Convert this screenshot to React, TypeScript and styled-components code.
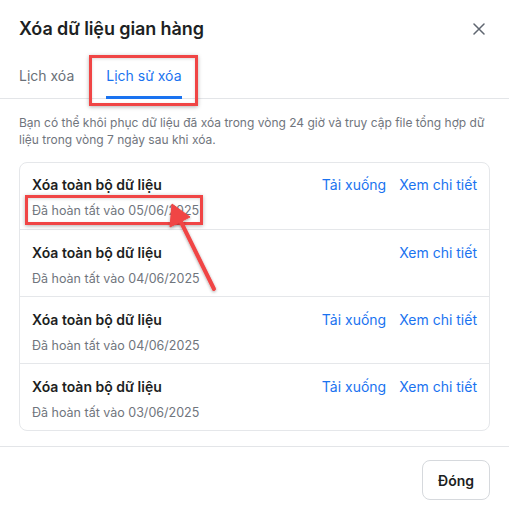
import React from "react";
import styled, { createGlobalStyle } from "styled-components";

const Global = createGlobalStyle`
  html, body { margin: 0; padding: 0; background: #fff; }
  body { font-family: Inter, "Noto Sans", sans-serif; color: #1f2328; }
  * { box-sizing: border-box; }
`;

const Modal = styled.div`
  position: relative;
  width: 509px;
  height: 506px;
  background: #fff;
  display: flex;
  flex-direction: column;
  overflow: hidden;
`;

const Header = styled.div`
  display: flex;
  align-items: center;
  justify-content: space-between;
  padding: 18px 22px 0 19px;
  height: 58px;
`;

const Title = styled.h1`
  margin: 0;
  font-size: 18px;
  font-weight: 600;
  color: #1d1f23;
  letter-spacing: -0.1px;
`;

const CloseBtn = styled.button`
  border: 0;
  background: none;
  padding: 0;
  width: 16px;
  height: 16px;
  display: flex;
  align-items: center;
  justify-content: center;
  color: #5f6670;
  cursor: pointer;
`;

const Tabs = styled.div`
  display: flex;
  gap: 32px;
  padding: 0 19px;
  border-bottom: 1px solid #e3e5e8;
  margin-top: 17px;
`;

const Tab = styled.div<{ $active?: boolean }>`
  font-size: 14px;
  line-height: 20px;
  padding: 10px 0 10px;
  color: ${(p) => (p.$active ? "#1a73f0" : "#6a7078")};
  border-bottom: 3px solid ${(p) => (p.$active ? "#1a73f0" : "transparent")};
  margin-bottom: -1px;
`;

const Body = styled.div`
  padding: 15px 19px 15px;
  display: flex;
  flex-direction: column;
  gap: 14px;
  border-bottom: 1px solid #e3e5e8;
`;

const Desc = styled.p`
  margin: 0;
  font-size: 12px;
  line-height: 17px;
  color: #70757d;
`;

const Card = styled.div`
  border: 1px solid #e5e7ea;
  border-radius: 8px;
`;

const Row = styled.div`
  display: flex;
  justify-content: space-between;
  align-items: flex-start;
  padding: 13px 12px 0;
  height: 66px;
  & + & { border-top: 1px solid #e5e7ea; height: 67px; padding-top: 14px; }
`;

const Info = styled.div`
  display: flex;
  flex-direction: column;
  gap: 8px;
`;

const RowTitle = styled.div`
  font-size: 14px;
  font-weight: 600;
  line-height: 18px;
  color: #1d1f23;
`;

const RowSub = styled.div`
  font-size: 12.5px;
  line-height: 17px;
  color: #70757d;
`;

const Actions = styled.div`
  display: flex;
  gap: 13px;
`;

const Link = styled.a`
  font-size: 14px;
  line-height: 18px;
  color: #1a73f0;
  text-decoration: none;
  cursor: pointer;
`;

const Footer = styled.div`
  display: flex;
  justify-content: flex-end;
  padding: 13px 19px;
`;

const Button = styled.button`
  height: 40px;
  padding: 0 15px;
  border: 1px solid #d6d9dd;
  border-radius: 8px;
  background: #fff;
  font-family: inherit;
  font-size: 14px;
  font-weight: 600;
  color: #1d1f23;
`;

const Highlight = styled.div<{ $x: number; $y: number; $w: number; $h: number }>`
  position: absolute;
  left: ${(p) => p.$x}px;
  top: ${(p) => p.$y}px;
  width: ${(p) => p.$w}px;
  height: ${(p) => p.$h}px;
  border: 3px solid #f04545;
  box-shadow: 0 1px 4px rgba(0, 0, 0, 0.3), inset 0 1px 3px rgba(0, 0, 0, 0.15);
  pointer-events: none;
`;

const ArrowSvg = styled.svg`
  position: absolute;
  left: 0;
  top: 0;
  pointer-events: none;
  overflow: visible;
`;

const rows = [
  { date: "05/06/2025", download: true },
  { date: "04/06/2025", download: false },
  { date: "04/06/2025", download: true },
  { date: "03/06/2025", download: true },
];

export default function App() {
  return (
    <>
      <Global />
      <Modal>
        <Header>
          <Title>Xóa dữ liệu gian hàng</Title>
          <CloseBtn aria-label="close">
            <svg width="12" height="12" viewBox="0 0 12 12">
              <path d="M1 1L11 11M11 1L1 11" stroke="currentColor" strokeWidth="1.5" strokeLinecap="round" />
            </svg>
          </CloseBtn>
        </Header>
        <Tabs>
          <Tab>Lịch xóa</Tab>
          <Tab $active>Lịch sử xóa</Tab>
        </Tabs>
        <Body>
          <Desc>
            Bạn có thể khôi phục dữ liệu đã xóa trong vòng 24 giờ và truy cập file tổng hợp dữ liệu trong vòng 7 ngày sau khi xóa.
          </Desc>
          <Card>
            {rows.map((r, i) => (
              <Row key={i}>
                <Info>
                  <RowTitle>Xóa toàn bộ dữ liệu</RowTitle>
                  <RowSub>Đã hoàn tất vào {r.date}</RowSub>
                </Info>
                <Actions>
                  {r.download && <Link>Tải xuống</Link>}
                  <Link>Xem chi tiết</Link>
                </Actions>
              </Row>
            ))}
          </Card>
        </Body>
        <Footer>
          <Button>Đóng</Button>
        </Footer>
        <Highlight $x={89} $y={55} $w={109} $h={51} />
        <Highlight $x={25} $y={195} $w={178} $h={30} />
        <ArrowSvg width="509" height="506">
          <defs>
            <filter id="sh" x="-50%" y="-50%" width="200%" height="200%">
              <feDropShadow dx="0" dy="1" stdDeviation="1.5" floodColor="#000" floodOpacity="0.35" />
            </filter>
          </defs>
          <g filter="url(#sh)" fill="#f04545" stroke="#f04545">
            <line x1="214" y1="289" x2="181" y2="222" strokeWidth="4" strokeLinecap="round" />
            <polygon points="172,204 170,227 190,217" strokeWidth="1" strokeLinejoin="round" />
          </g>
        </ArrowSvg>
      </Modal>
    </>
  );
}
